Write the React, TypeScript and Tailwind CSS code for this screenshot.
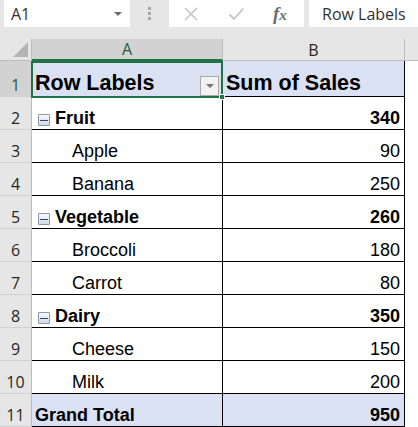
import React from 'react';

type Row = { n: number; label: string; value: number; group?: boolean };

const rows: Row[] = [
  { n: 2, label: 'Fruit', value: 340, group: true },
  { n: 3, label: 'Apple', value: 90 },
  { n: 4, label: 'Banana', value: 250 },
  { n: 5, label: 'Vegetable', value: 260, group: true },
  { n: 6, label: 'Broccoli', value: 180 },
  { n: 7, label: 'Carrot', value: 80 },
  { n: 8, label: 'Dairy', value: 350, group: true },
  { n: 9, label: 'Cheese', value: 150 },
  { n: 10, label: 'Milk', value: 200 },
];

const uiFont = { fontFamily: '"Segoe UI", "Open Sans", "Noto Sans", sans-serif' };
const cellFont = { fontFamily: '"Liberation Sans", Arial, sans-serif' };

function MinusBox() {
  return (
    <span className="mr-[5px] mb-[1px] flex h-[12px] w-[12px] items-center justify-center rounded-[1px] border border-[#8a97ad] bg-gradient-to-b from-[#f7f9fc] to-[#d3dae6]">
      <span className="h-[1px] w-[8px] bg-[#3c4a60]" />
    </span>
  );
}

function RowHeader({ n, selected, h }: { n: number; selected?: boolean; h: string }) {
  return (
    <div
      className={`${h} flex w-[32px] shrink-0 items-end justify-center border-r border-b border-r-[#bcbcbc] border-b-[#d0d0d0] pb-[3px] text-[16px] leading-none ${
        selected ? 'bg-[#d2d2d2] text-[#1e5e3a]' : 'bg-[#e6e6e6] text-[#262626]'
      }`}
      style={uiFont}
    >
      {n}
    </div>
  );
}

export default function App() {
  return (
    <div className="h-[427px] w-[418px] overflow-hidden bg-white" style={cellFont}>
      {/* formula bar */}
      <div className="flex h-[39px] items-start bg-[#e6e6e6]" style={uiFont}>
        <div className="ml-[4px] flex h-[27px] w-[126px] items-center justify-between bg-white pl-[7px] pr-[8px] text-[16px] text-[#333]">
          <span>A1</span>
          <span className="h-0 w-0 border-x-[4px] border-t-[4px] border-x-transparent border-t-[#6b6b6b]" />
        </div>
        <div className="flex h-[27px] w-[39px] flex-col items-center justify-center gap-[2px]">
          <span className="h-[3px] w-[3px] bg-[#a8a8a8]" />
          <span className="h-[3px] w-[3px] bg-[#a8a8a8]" />
          <span className="h-[3px] w-[3px] bg-[#a8a8a8]" />
        </div>
        <div className="flex h-[27px] w-[135px] items-center bg-white">
          <svg className="ml-[14px]" width="16" height="16" viewBox="0 0 16 16">
            <path d="M2 2 L14 14 M14 2 L2 14" stroke="#c4c4c4" strokeWidth="1.6" fill="none" />
          </svg>
          <svg className="ml-[29px]" width="17" height="14" viewBox="0 0 17 14">
            <path d="M1.5 7.5 L6 12 L15.5 1.5" stroke="#c4c4c4" strokeWidth="1.8" fill="none" />
          </svg>
          <span
            className="ml-[28px] text-[19px] font-bold italic leading-none text-[#6e6e6e]"
            style={{ fontFamily: '"Liberation Serif", "Times New Roman", serif' }}
          >
            f<span className="text-[15px]">x</span>
          </span>
        </div>
        <div className="ml-[5px] flex h-[27px] flex-1 items-center bg-white pl-[13px] text-[16px] text-[#333]">
          Row Labels
        </div>
      </div>

      {/* column headers */}
      <div className="flex h-[22px]" style={uiFont}>
        <div className="relative w-[32px] shrink-0 border-r border-b border-r-[#bcbcbc] border-b-[#bcbcbc] bg-[#e6e6e6]">
          <svg className="absolute right-[3px] bottom-[3px]" width="15" height="15" viewBox="0 0 15 15">
            <path d="M15 0 L15 15 L0 15 Z" fill="#b4b4b4" />
          </svg>
        </div>
        <div className="flex w-[191px] shrink-0 items-center justify-center border-r border-b-2 border-r-[#bcbcbc] border-b-[#217346] bg-[#d2d2d2] text-[16px] text-[#1e5e3a]">
          A
        </div>
        <div className="flex w-[182px] shrink-0 items-center justify-center border-r border-b border-r-[#bcbcbc] border-b-[#bcbcbc] bg-[#e6e6e6] text-[16px] text-[#262626]">
          B
        </div>
        <div className="flex-1 border-b border-b-[#bcbcbc] bg-[#e6e6e6]" />
      </div>

      {/* row 1: pivot header */}
      <div className="flex h-[36px]">
        <RowHeader n={1} selected h="h-[36px]" />
        <div className="relative flex w-[191px] shrink-0 items-end border-r border-b border-black bg-[#d9e1f2] pb-[2px] pl-[3px] text-[21.5px] leading-none font-bold text-black">
          Row Labels
          <div className="absolute top-[15px] right-[3px] flex h-[20px] w-[19px] items-center justify-center border border-[#ababab] bg-[#f2f2f2]">
            <span className="h-0 w-0 border-x-[4px] border-t-[4px] border-x-transparent border-t-[#777]" />
          </div>
          <div className="pointer-events-none absolute top-0 left-[-1px] h-[37px] w-[192px] border-2 border-[#217346]" />
          <div className="absolute top-[33px] left-[187px] h-[6px] w-[6px] border border-white bg-[#217346]" />
        </div>
        <div className="flex w-[182px] shrink-0 items-end border-r border-b border-black bg-[#d9e1f2] pb-[2px] pl-[3px] text-[21.5px] leading-none font-bold text-black">
          Sum of Sales
        </div>
        <div className="flex-1" />
      </div>

      {rows.map((r) => (
        <div key={r.n} className="flex h-[33px]">
          <RowHeader n={r.n} h="h-[33px]" />
          <div
            className={`flex w-[191px] shrink-0 items-end border-r border-b border-black pb-[2px] text-[18px] leading-none text-black ${
              r.group ? 'pl-[6px] font-bold' : 'pl-[40px]'
            }`}
          >
            {r.group && <MinusBox />}
            {r.label}
          </div>
          <div
            className={`flex w-[182px] shrink-0 items-end justify-end border-r border-b border-black pr-[4px] pb-[2px] text-[18px] leading-none text-black ${
              r.group ? 'font-bold' : ''
            }`}
          >
            {r.value}
          </div>
          <div className="flex-1" />
        </div>
      ))}

      {/* grand total */}
      <div className="flex h-[33px]">
        <RowHeader n={11} h="h-[33px]" />
        <div className="flex w-[191px] shrink-0 items-end border-r border-b border-black bg-[#d9e1f2] pb-[2px] pl-[3px] text-[18px] leading-none font-bold text-black">
          Grand Total
        </div>
        <div className="flex w-[182px] shrink-0 items-end justify-end border-r border-b border-black bg-[#d9e1f2] pr-[4px] pb-[2px] text-[18px] leading-none font-bold text-black">
          950
        </div>
        <div className="flex-1" />
      </div>
    </div>
  );
}
